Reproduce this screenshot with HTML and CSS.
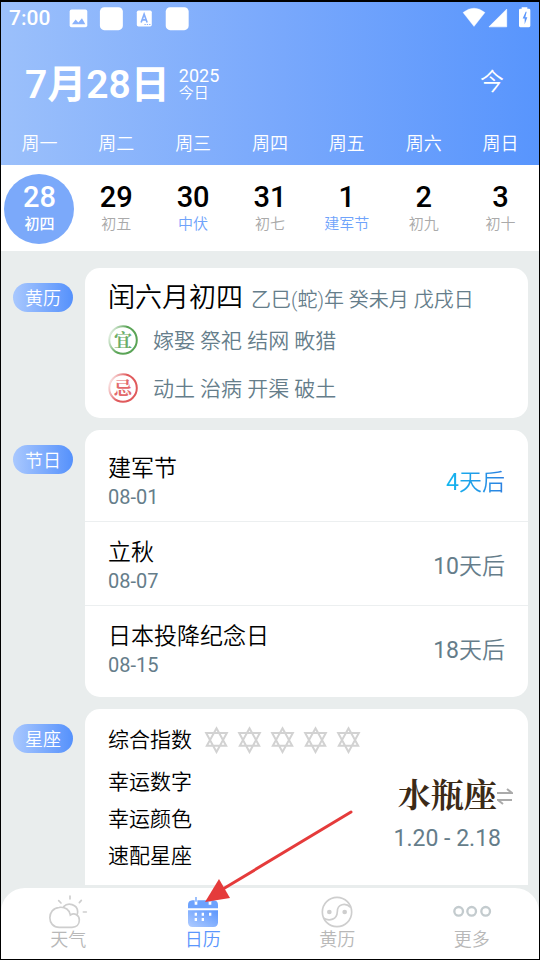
FILE: index.html
```html
<!DOCTYPE html>
<html lang="zh-CN">
<head>
<meta charset="utf-8">
<meta name="viewport" content="width=device-width, initial-scale=1">
<title>日历</title>
<link rel="stylesheet" href="styles.css">
</head>
<body>
<div class="app">
  <header class="header">
    <div class="status">
      <span class="clock">7:00</span>
      <svg class="status-left" viewBox="204 15 370 80" aria-hidden="true">
        <rect x="209" y="28" width="53" height="53" rx="6" fill="#fff"/>
        <path d="M216 72l11-14 8 9 11-13 10 18z" fill="#8ab2fb"/>
        <rect x="300" y="21" width="69" height="69" rx="13" fill="#fff"/>
        <rect x="411" y="31" width="45" height="48" rx="5" fill="#fff"/>
        <path d="M424 67l9-25 9 25M427 59h12" fill="none" stroke="#84aefb" stroke-width="5"/>
        <path d="M434 73h4m3 0h4m3 0h4" stroke="#84aefb" stroke-width="3"/>
        <rect x="498" y="21" width="69" height="69" rx="13" fill="#fff"/>
      </svg>
      <svg class="status-right" viewBox="576 15 207 80" aria-hidden="true">
        <path d="M579 37q33-26 66 0l-33 42z" fill="#fff" stroke="#fff" stroke-width="1"/>
        <path d="M710 27v53h-53z" fill="#fff" stroke="#fff" stroke-width="2" stroke-linejoin="round"/>
        <path d="M755 21h17v5h5q4 0 4 4v47q0 4-4 4h-26q-4 0-4-4V30q0-4 4-4h4z" fill="#fff"/>
        <path d="M767 35l-9 20h6v17l8-21h-6l4-16z" fill="#5c97fc"/>
      </svg>
    </div>
    <div class="title-row">
      <h1 class="date">7月28日</h1>
      <div class="date-side"><span class="year">2025</span><span class="today">今日</span></div>
      <button class="today-btn" type="button">今</button>
    </div>
    <div class="week weekdays">
      <span>周一</span><span>周二</span><span>周三</span><span>周四</span><span>周五</span><span>周六</span><span>周日</span>
    </div>
  </header>

  <div class="week days">
    <button class="day day-on" type="button"><span class="num">28</span><span class="lunar">初四</span></button>
    <button class="day" type="button"><span class="num">29</span><span class="lunar">初五</span></button>
    <button class="day" type="button"><span class="num">30</span><span class="lunar mark">中伏</span></button>
    <button class="day" type="button"><span class="num">31</span><span class="lunar">初七</span></button>
    <button class="day" type="button"><span class="num">1</span><span class="lunar mark">建军节</span></button>
    <button class="day" type="button"><span class="num">2</span><span class="lunar">初九</span></button>
    <button class="day" type="button"><span class="num">3</span><span class="lunar">初十</span></button>
  </div>

  <main class="main">
    <section class="section">
      <h2 class="pill">黄历</h2>
      <div class="card almanac">
        <div class="lunar-line"><span class="lunar-date">闰六月初四</span><span class="ganzhi">乙巳(蛇)年 癸未月 戊戌日</span></div>
        <div class="advice">
          <svg class="seal" viewBox="0 0 30 30" role="img" aria-label="宜">
            <defs><linearGradient id="g1" x1="0" y1="0.2" x2="1" y2="0.6"><stop offset="0" stop-color="#5aa456" stop-opacity="0.1"/><stop offset="0.5" stop-color="#5aa456"/></linearGradient></defs>
            <circle cx="15" cy="15" r="13.8" fill="none" stroke="url(#g1)" stroke-width="2"/>
            <text class="seal-text good" x="15" y="22" text-anchor="middle">宜</text>
          </svg>
          <span class="advice-text">嫁娶 祭祀 结网 畋猎</span>
        </div>
        <div class="advice">
          <svg class="seal" viewBox="0 0 30 30" role="img" aria-label="忌">
            <defs><linearGradient id="g2" x1="0" y1="0.2" x2="1" y2="0.6"><stop offset="0" stop-color="#e05a5c" stop-opacity="0.1"/><stop offset="0.5" stop-color="#e05a5c"/></linearGradient></defs>
            <circle cx="15" cy="15" r="13.8" fill="none" stroke="url(#g2)" stroke-width="2"/>
            <text class="seal-text bad" x="15" y="22" text-anchor="middle">忌</text>
          </svg>
          <span class="advice-text">动土 治病 开渠 破土</span>
        </div>
      </div>
    </section>

    <section class="section">
      <h2 class="pill">节日</h2>
      <ul class="card festivals">
        <li class="festival"><div><div class="name">建军节</div><div class="when">08-01</div></div><span class="left soon"><span class="count">4</span>天后</span></li>
        <li class="festival"><div><div class="name">立秋</div><div class="when">08-07</div></div><span class="left"><span class="count">10</span>天后</span></li>
        <li class="festival"><div><div class="name">日本投降纪念日</div><div class="when">08-15</div></div><span class="left"><span class="count">18</span>天后</span></li>
      </ul>
    </section>

    <section class="section">
      <h2 class="pill">星座</h2>
      <div class="card zodiac">
        <div class="luck">
          <div class="luck-score"><span>综合指数</span>
            <svg class="stars" viewBox="612 78 470 84" aria-hidden="true">
              <defs><path id="star" d="M0-34L29 18H-29ZM0 37L-31-20H31Z" fill="none" stroke="#d2d2d2" stroke-width="6"/></defs>
              <use href="#star" x="649" y="119"/><use href="#star" x="748" y="119"/><use href="#star" x="847" y="119"/><use href="#star" x="946" y="119"/><use href="#star" x="1045" y="119"/>
            </svg>
          </div>
          <div class="luck-row">幸运数字</div>
          <div class="luck-row">幸运颜色</div>
          <div class="luck-row">速配星座</div>
        </div>
        <button class="sign" type="button">
          <span class="sign-body"><span class="sign-name">水瓶座</span><span class="sign-range">1.20 - 2.18</span></span>
          <svg class="swap" viewBox="0 0 16 52" aria-hidden="true"><path d="M0 24h15l-5-4M15 31H1l5 4" fill="none" stroke="#aaa" stroke-width="2"/></svg>
        </button>
      </div>
    </section>
  </main>

  <nav class="tabs">
    <a class="tab" href="#weather">
      <svg class="tab-icon" viewBox="144 72 120 105" aria-hidden="true">
        <g fill="none" stroke="#cecece" stroke-width="5" stroke-linecap="round">
          <path d="M178 172C140 172 140 115 178 112C196 110 209 120 211 135C224 127 238 136 238 150C238 164 229 172 216 172Z"/>
          <path d="M191 110C204 96 232 103 233 125Q233 130 231 134M210 78v9M176 92l7 7M244 91l-6 7M250 126h9"/>
        </g>
      </svg>
      <span>天气</span>
    </a>
    <a class="tab tab-on" href="#calendar">
      <svg class="tab-icon" viewBox="549 72 120 105" aria-hidden="true">
        <defs><linearGradient id="cal" x1="0" y1="1" x2="1" y2="0"><stop offset="0" stop-color="#b0ccff"/><stop offset="1" stop-color="#5b96fd"/></linearGradient></defs>
        <path d="M564 115v-10q0-13 13-14h64q13 1 13 14v10z" fill="#6da2fd"/>
        <path d="M564 121h90v36q0 14-14 14h-62q-14 0-14-14z" fill="url(#cal)"/>
        <path d="M588 84v20M630 84v20" stroke="#fff" stroke-width="8"/>
        <path d="M588 81v14M630 81v14" stroke="#6da2fd" stroke-width="4"/>
        <path d="M584 128h7v9h-7zM605 128h7v9h-7zM627 128h7v9h-7zM584 144h7v9h-7zM605 144h7v9h-7z" fill="#fff"/>
      </svg>
      <span>日历</span>
    </a>
    <a class="tab" href="#almanac">
      <svg class="tab-icon" viewBox="144 72 120 105" aria-hidden="true">
        <circle cx="204" cy="126" r="44" fill="none" stroke="#cecece" stroke-width="5"/>
        <path d="M164 145c18 10 40 3 41-20 0-23 24-28 40-13" fill="none" stroke="#cecece" stroke-width="5"/>
        <circle cx="181" cy="126" r="7" fill="#cecece"/><circle cx="227" cy="126" r="7" fill="#cecece"/>
      </svg>
      <span>黄历</span>
    </a>
    <a class="tab" href="#more">
      <svg class="tab-icon" viewBox="549 72 120 105" aria-hidden="true">
        <g fill="none" stroke="#c3cbce" stroke-width="7"><circle cx="569" cy="124" r="13"/><circle cx="608" cy="124" r="13"/><circle cx="650" cy="124" r="13"/></g>
      </svg>
      <span>更多</span>
    </a>
  </nav>

  <svg class="arrow" viewBox="0 0 150 94" aria-hidden="true">
    <path d="M146 2L18 79" stroke="#e53b3b" stroke-width="3" stroke-linecap="round"/>
    <path d="M0 92L14 69L25 88Z" fill="#e53b3b"/>
  </svg>
</div>
</body>
</html>
```

FILE: styles.css
```css
* {
  box-sizing: border-box;
}

body {
  margin: 0;
  font-family: Roboto, "Noto Sans CJK SC", sans-serif;
  font-weight: 350;
  color: #000;
}

h1, h2, ul {
  margin: 0;
  padding: 0;
  list-style: none;
}

button {
  margin: 0;
  padding: 0;
  border: 0;
  background: none;
  font: inherit;
  color: inherit;
}

svg {
  display: block;
  flex: none;
}

.app {
  position: relative;
  display: flex;
  flex-direction: column;
  height: 100vh;
  border: 1px solid #000;
  border-top-width: 2px;
  background: #e9eded;
  overflow: hidden;
}

.header {
  padding-bottom: 9px;
  background: linear-gradient(90deg, #9bc0fb, #7aa9fc 50%, #5895fd);
  color: #fff;
}

.status {
  display: flex;
  align-items: center;
  height: 32px;
  padding: 0 8px;
}

.clock {
  width: 59px;
  font-size: 21px;
  font-weight: 500;
  line-height: 32px;
}

.status-left {
  width: 123px;
  height: 27px;
}

.status-right {
  width: 69px;
  height: 27px;
  margin-left: auto;
}

.title-row {
  display: flex;
  align-items: center;
  height: 98px;
  padding: 0 35px 0 24px;
}

.date {
  padding-top: 3px;
  font-size: 39px;
  font-weight: 600;
  line-height: 48px;
}

.date-side {
  display: flex;
  flex-direction: column;
  margin-left: 9px;
}

.year {
  font-size: 18px;
  font-weight: 400;
  line-height: 20px;
}

.today {
  font-size: 15px;
  line-height: 15px;
}

.today-btn {
  margin-left: auto;
  padding-bottom: 3px;
  font-size: 24px;
  line-height: 32px;
}

.week {
  display: grid;
  grid-template-columns: repeat(7, 1fr);
  justify-items: center;
}

.weekdays {
  font-size: 18px;
  line-height: 24px;
}

.days {
  padding: 9px 0 7px;
  background: #fff;
}

.day {
  display: flex;
  flex-direction: column;
  align-items: center;
  width: 70px;
  height: 70px;
  padding-top: 5px;
  border-radius: 50%;
}

.day-on {
  background: #7ba9fa;
  color: #fff;
}

.num {
  font-size: 29px;
  font-weight: 500;
  line-height: 36px;
}

.lunar {
  font-size: 15px;
  line-height: 18px;
  color: #aaa;
  white-space: nowrap;
}

.mark {
  color: #6fa3fb;
}

.day-on .lunar {
  color: #fff;
  font-weight: 500;
}

.main {
  flex: 1;
  min-height: 0;
  display: flex;
  flex-direction: column;
  gap: 12px;
  padding: 17px 11px 0 12px;
  overflow: hidden;
}

.section {
  flex: none;
  display: flex;
  align-items: flex-start;
  gap: 12px;
}

.pill {
  flex: none;
  width: 60px;
  margin-top: 15px;
  padding-top: 2px;
  border-radius: 15px;
  background: linear-gradient(90deg, #a9c8fe, #5591fc);
  color: #fff;
  font-size: 18px;
  font-weight: 350;
  line-height: 27px;
  text-align: center;
}

.card {
  flex: 1;
  min-width: 0;
  padding-left: 23px;
  border-radius: 15px;
  background: #fff;
}

.almanac {
  padding-top: 12px;
  padding-bottom: 6px;
  color: #657d8a;
}

.lunar-line {
  display: flex;
  align-items: baseline;
  gap: 8px;
  height: 36px;
  line-height: 36px;
  white-space: nowrap;
}

.lunar-date {
  font-size: 27px;
  color: #000;
}

.ganzhi {
  font-size: 20px;
}

.advice {
  display: flex;
  align-items: center;
  gap: 15px;
  height: 48px;
  font-size: 21px;
  line-height: 28px;
}

.advice-text {
  padding-top: 2px;
}

.seal {
  width: 30px;
  height: 30px;
}

.seal-text {
  font-family: "Noto Serif CJK SC", "Noto Sans CJK SC", serif;
  font-size: 18px;
  font-weight: 700;
}

.good {
  fill: #6cae68;
}

.bad {
  fill: #e36a6c;
}

.festivals {
  padding-top: 8px;
  padding-bottom: 7px;
  padding-left: 0;
}

.festival {
  display: flex;
  align-items: center;
  justify-content: space-between;
  height: 84px;
  padding: 17px 23px 10px;
  border-bottom: 1px solid #eceff0;
}

.festival:last-child {
  border-bottom-color: transparent;
}

.name {
  font-size: 23px;
  line-height: 28px;
}

.when {
  font-size: 20px;
  font-weight: 400;
  line-height: 28px;
  color: #657d8a;
}

.left {
  font-size: 23px;
  line-height: 28px;
  color: #657d8a;
}

.count {
  font-weight: 400;
}

.soon {
  background: linear-gradient(90deg, #14b8f0, #2d7fe0);
  background-clip: text;
  color: transparent;
}

.zodiac {
  display: flex;
  justify-content: space-between;
  padding: 11px 15px 30px 23px;
}

.luck {
  font-size: 21px;
  line-height: 37px;
}

.luck-score {
  display: flex;
  align-items: center;
  gap: 12px;
  height: 40px;
  margin-bottom: 4px;
}

.stars {
  width: 157px;
  height: 28px;
}

.sign {
  display: flex;
  align-items: flex-start;
  align-self: flex-start;
  margin-top: 49px;
}

.sign-body {
  display: flex;
  flex-direction: column;
  align-items: center;
}

.sign-name {
  font-family: "Noto Serif CJK SC", "Noto Sans CJK SC", serif;
  font-size: 33px;
  font-weight: 700;
  line-height: 48px;
  color: #3b2a17;
}

.sign-range {
  font-size: 23px;
  font-weight: 400;
  line-height: 44px;
  color: #657d8a;
}

.swap {
  width: 16px;
  height: 52px;
  margin-left: -4px;
}

.tabs {
  flex: none;
  display: grid;
  grid-template-columns: repeat(4, 1fr);
  margin-top: 3px;
  padding: 6px 0 8px;
  border-radius: 24px 24px 0 0;
  background: #fff;
}

.tab {
  display: flex;
  flex-direction: column;
  align-items: center;
  font-size: 18px;
  line-height: 22px;
  color: #b8b8b8;
  text-decoration: none;
}

.tab-on {
  color: #5b96fd;
}

.tab-icon {
  width: 40px;
  height: 35px;
}

.arrow {
  position: absolute;
  left: 204px;
  bottom: 55px;
  width: 150px;
  height: 94px;
}
```
